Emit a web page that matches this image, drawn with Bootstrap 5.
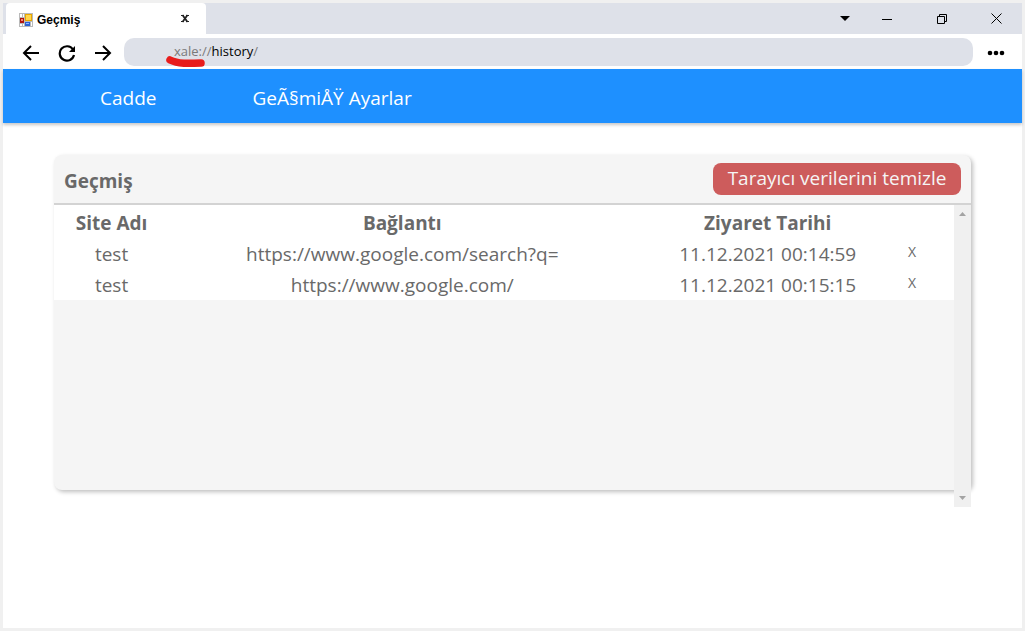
<!DOCTYPE html>
<html lang="tr">
<head>
<meta charset="utf-8">
<meta name="viewport" content="width=device-width, initial-scale=1">
<title>Geçmiş</title>
<link href="https://cdn.jsdelivr.net/npm/bootstrap@5.3.0/dist/css/bootstrap.min.css" rel="stylesheet">
<style>
  body { font-family: "Open Sans", "Noto Sans", sans-serif; background: #fff; color: #696969; }
  .window-frame { border: 3px solid #f0f0f0; }
  .tab-strip { height: 31px; background: #dee1e9; padding-left: 3px; }
  .page-tab { width: 200px; background: #fff; border-radius: 4px 4px 0 0; padding: 2px 14px 0 13px; color: #000; font: bold 12px "Liberation Sans", sans-serif; }
  .page-tab h1 { font: inherit; }
  .plain-btn { border: 0; background: none; padding: 0; color: inherit; display: flex; align-items: center; justify-content: center; }
  .caption-btns { margin-right: -2px; }
  .caption-btn { width: 55px; color: #000; }
  .caption-menu { width: 29px; }
  .tool-bar { height: 35px; padding: 2px 8px 0 10px; color: #000; }
  .tool-btn { width: 36px; height: 33px; }
  .address-bar { height: 28px; border-radius: 10px; background: #dee1e9; padding-left: 50px; font-size: 13px; line-height: 26px; color: #7a7a7a; margin: 0 5px 2px 3px; }
  .address-bar b { font-weight: 400; color: #000; }
  .red-stroke { left: 41px; top: 18px; }
  .site-nav { height: 54px; background: #1e90ff; box-shadow: 0 2px 3px rgba(0,0,0,.22); padding: 4px 0 0 97px; gap: 96px; font-size: 19px; line-height: 28px; }
  .site-nav a { color: #fff; text-decoration: none; }
  .history-box { width: 90%; height: 335px; margin-top: 32px; background: #f5f5f5; border-radius: 8px; box-shadow: 2px 2px 4px rgba(0,0,0,.25); }
  .history-head { height: 50px; border-bottom: 2px solid #d3d3d3; padding: 0 10px; }
  .history-head h2 { font-size: 19px; line-height: 28px; font-weight: 700; }
  .clear-btn { background: #cd5c5c; color: #f5f5f5; border: 0; border-radius: 8px; height: 32px; width: 248px; padding: 0 0 2px; font-size: 19px; line-height: 28px; white-space: nowrap; }
  .history-list { height: 302px; }
  .history-table { table-layout: fixed; background: #fff; font-size: 19px; line-height: 29px; text-align: center; }
  .history-table th, .history-table td { padding: 2px 0 0; white-space: nowrap; }
  .history-table thead th { padding-top: 4px; }
  .col-site { width: 12.8%; }
  .col-link { width: 51.8%; }
  .col-date { width: 29.4%; }
  .delete-btn { width: 24px; font-size: 14px; line-height: 24px; height: 24px; }
  .scroll-track { width: 17px; background: #f0f0f0; padding: 7px 0; }
</style>
<script src="https://cdn.jsdelivr.net/npm/bootstrap@5.3.0/dist/js/bootstrap.bundle.min.js"></script>
</head>
<body>
<div class="window-frame min-vh-100">
  <header>
    <div class="tab-strip d-flex">
      <div class="page-tab d-flex align-items-center">
        <svg width="14" height="14" viewBox="0 0 14 14" aria-hidden="true">
          <rect width="14" height="14" fill="#b9b9b9"/><path d="M1 1h2v3H1zM4 1h1v3H4zM1 11h2v2H1zM4 11h1v2H4zM12 9h1v4h-1z" fill="#fff"/>
          <rect x="6" y="1" width="7" height="7" fill="#e8a800"/><rect x="7" y="2" width="5" height="5" fill="#ffd64d"/>
          <rect x="1" y="5" width="4" height="5" fill="#b3140c"/><rect x="2" y="6" width="2" height="2" fill="#f58a78"/>
          <rect x="6" y="9" width="5" height="4" fill="#2c62d4"/><rect x="7" y="10" width="3" height="1" fill="#8fb6ff"/>
        </svg>
        <h1 class="m-0 ms-1 me-auto">Geçmiş</h1>
        <button class="plain-btn" type="button" aria-label="Sekmeyi kapat">
          <svg width="14" height="14" viewBox="0 0 14 14"><path d="M3 2.500h3M8 2.500h3M3 8.500h3M8 8.500h3" stroke="#222"/><path d="M4.500 2l5 7M9.500 2l-5 7" stroke="#222" stroke-width="1.800"/></svg>
        </button>
      </div>
      <div class="caption-btns ms-auto d-flex">
        <button class="plain-btn caption-menu" type="button" aria-label="Sekmeler"><svg width="10" height="5" viewBox="0 0 10 5"><path d="M0 0h10L5 5z"/></svg></button>
        <button class="plain-btn caption-btn" type="button" aria-label="Küçült"><svg width="10" height="10" viewBox="0 0 10 10"><path d="M0 5.500h10" stroke="#000"/></svg></button>
        <button class="plain-btn caption-btn" type="button" aria-label="Geri yükle"><svg width="10" height="10" viewBox="0 0 10 10" fill="none" stroke="#000"><path d="M.5 2.500h7v7h-7zM2.500 2.500v-2h7v7h-2"/></svg></button>
        <button class="plain-btn caption-btn" type="button" aria-label="Kapat"><svg width="11" height="11" viewBox="0 0 11 11" stroke="#000"><path d="M.5.5l10 10M10.500.5l-10 10"/></svg></button>
      </div>
    </div>
    <div class="tool-bar d-flex align-items-center">
      <button class="plain-btn tool-btn" type="button" aria-label="Geri"><svg width="18" height="16" viewBox="0 0 18 16" fill="none" stroke="#000" stroke-width="2"><path d="M17 8H2M9 1L2 8l7 7"/></svg></button>
      <button class="plain-btn tool-btn" type="button" aria-label="Yenile"><svg width="18" height="18" viewBox="0 0 18 18"><path d="M15 5.500A7.200 7.200 0 1 0 16 11" fill="none" stroke="#000" stroke-width="2.200"/><path d="M17 2v6h-6z"/></svg></button>
      <button class="plain-btn tool-btn" type="button" aria-label="İleri"><svg width="18" height="16" viewBox="0 0 18 16" fill="none" stroke="#000" stroke-width="2"><path d="M1 8h15M9 1l7 7-7 7"/></svg></button>
      <div class="address-bar position-relative flex-grow-1" role="textbox" aria-label="Adres">xale://<b>history</b>/<svg class="red-stroke position-absolute" width="42" height="12" viewBox="0 0 42 12" aria-hidden="true"><path d="M5 4C13 8 24 7.500 36 7" fill="none" stroke="#e81c1c" stroke-width="7.500" stroke-linecap="round"/></svg></div>
      <button class="plain-btn tool-btn" type="button" aria-label="Menü"><svg width="18" height="6" viewBox="0 0 18 6"><circle cx="3" cy="3" r="2.300"/><circle cx="9" cy="3" r="2.300"/><circle cx="15" cy="3" r="2.300"/></svg></button>
    </div>
  </header>
  <nav class="site-nav d-flex align-items-center"><a href="#">Cadde</a><a href="#">GeÃ§miÅŸ Ayarlar</a></nav>
  <main>
    <section class="history-box mx-auto">
      <div class="history-head d-flex align-items-center justify-content-between">
        <h2 class="m-0 pt-1">Geçmiş</h2>
        <button class="clear-btn" type="button">Tarayıcı verilerini temizle</button>
      </div>
      <div class="history-list d-flex">
        <div class="flex-grow-1">
          <table class="history-table w-100">
            <thead><tr><th class="col-site">Site Adı</th><th class="col-link">Bağlantı</th><th class="col-date">Ziyaret Tarihi</th><th></th></tr></thead>
            <tbody>
              <tr><td>test</td><td>https://www.google.com/search?q=</td><td>11.12.2021 00:14:59</td><td class="align-top"><button class="plain-btn delete-btn" type="button">X</button></td></tr>
              <tr><td>test</td><td>https://www.google.com/</td><td>11.12.2021 00:15:15</td><td class="align-top"><button class="plain-btn delete-btn" type="button">X</button></td></tr>
            </tbody>
          </table>
        </div>
        <div class="scroll-track flex-shrink-0 d-flex flex-column align-items-center justify-content-between" aria-hidden="true">
          <svg width="7" height="4" viewBox="0 0 7 4" fill="#a3a3a3"><path d="M0 4h7L3.500 0z"/></svg>
          <svg width="7" height="4" viewBox="0 0 7 4" fill="#a3a3a3"><path d="M0 0h7L3.500 4z"/></svg>
        </div>
      </div>
    </section>
  </main>
</div>
</body>
</html>
